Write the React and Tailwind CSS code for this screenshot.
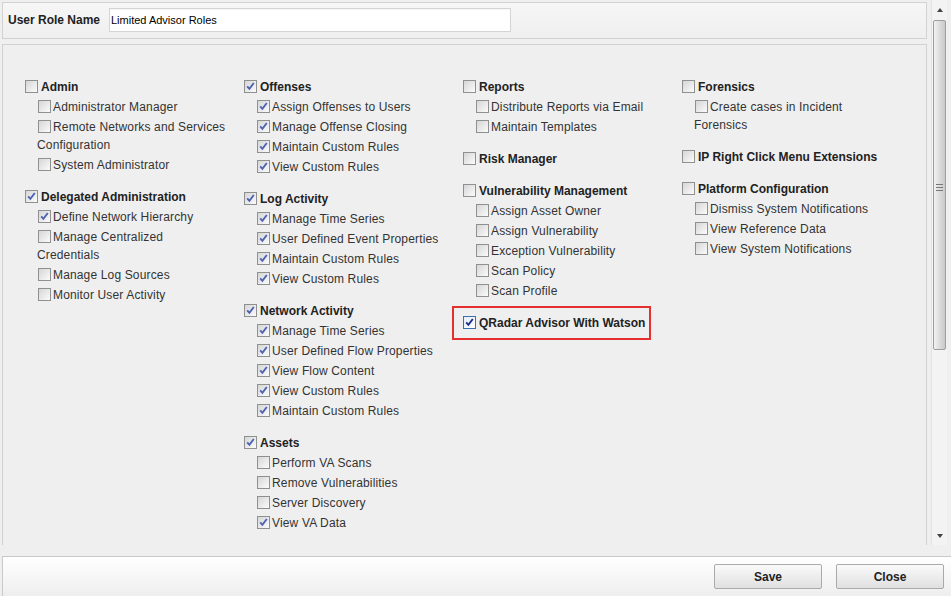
import React from 'react'

const columns = [
  [
    { title: 'Admin', checked: false, items: [
      { label: 'Administrator Manager' },
      { label: 'Remote Networks and Services Configuration' },
      { label: 'System Administrator' },
    ] },
    { title: 'Delegated Administration', checked: true, items: [
      { label: 'Define Network Hierarchy', checked: true },
      { label: 'Manage Centralized Credentials' },
      { label: 'Manage Log Sources' },
      { label: 'Monitor User Activity' },
    ] },
  ],
  [
    { title: 'Offenses', checked: true, items: [
      { label: 'Assign Offenses to Users', checked: true },
      { label: 'Manage Offense Closing', checked: true },
      { label: 'Maintain Custom Rules', checked: true },
      { label: 'View Custom Rules', checked: true },
    ] },
    { title: 'Log Activity', checked: true, items: [
      { label: 'Manage Time Series', checked: true },
      { label: 'User Defined Event Properties', checked: true },
      { label: 'Maintain Custom Rules', checked: true },
      { label: 'View Custom Rules', checked: true },
    ] },
    { title: 'Network Activity', checked: true, items: [
      { label: 'Manage Time Series', checked: true },
      { label: 'User Defined Flow Properties', checked: true },
      { label: 'View Flow Content', checked: true },
      { label: 'View Custom Rules', checked: true },
      { label: 'Maintain Custom Rules', checked: true },
    ] },
    { title: 'Assets', checked: true, items: [
      { label: 'Perform VA Scans' },
      { label: 'Remove Vulnerabilities' },
      { label: 'Server Discovery' },
      { label: 'View VA Data', checked: true },
    ] },
  ],
  [
    { title: 'Reports', checked: false, items: [
      { label: 'Distribute Reports via Email' },
      { label: 'Maintain Templates' },
    ] },
    { title: 'Risk Manager', checked: false, items: [] },
    { title: 'Vulnerability Management', checked: false, items: [
      { label: 'Assign Asset Owner' },
      { label: 'Assign Vulnerability' },
      { label: 'Exception Vulnerability' },
      { label: 'Scan Policy' },
      { label: 'Scan Profile' },
    ] },
    { title: 'QRadar Advisor With Watson', checked: true, focus: true, highlight: true, items: [] },
  ],
  [
    { title: 'Forensics', checked: false, items: [
      { label: 'Create cases in Incident Forensics' },
    ] },
    { title: 'IP Right Click Menu Extensions', checked: false, items: [] },
    { title: 'Platform Configuration', checked: false, items: [
      { label: 'Dismiss System Notifications' },
      { label: 'View Reference Data' },
      { label: 'View System Notifications' },
    ] },
  ],
]

function Box({ checked, focus }) {
  return (
    <span
      className={
        'relative inline-block w-[13px] h-[13px] align-[-2px] border ' +
        (focus
          ? 'border-[#3a6fb0] bg-gradient-to-br from-[#e4ecf6] to-white'
          : 'border-[#8f9090] bg-gradient-to-br from-[#d6d6d6] to-[#fbfbfb]')
      }
    >
      {checked && (
        <svg viewBox="0 0 11 11" className="absolute left-0 top-0 w-[11px] h-[11px]">
          <path
            d="M2.2 5.4 L4.4 7.8 L8.8 2"
            fill="none"
            stroke={focus ? '#1b2c8c' : '#4d63b3'}
            strokeWidth="1.9"
          />
        </svg>
      )}
    </span>
  )
}

function Group({ group }) {
  return (
    <div className="relative mb-[12px]">
      {group.highlight && (
        <div className="absolute left-[-11px] top-[-7px] w-[199px] h-[34px] border-2 border-[#e5302f]" />
      )}
      <div className="py-[1px] leading-[18px] font-bold text-[#222]">
        <Box checked={group.checked} focus={group.focus} />
        <span className="ml-[3px]">{group.title}</span>
      </div>
      {group.items.map((it) => (
        <div key={it.label} className="pl-[12px] py-[1px] leading-[18px] text-[#333] tracking-[0.15px]">
          <span className="ml-[1px]">
            <Box checked={it.checked} />
          </span>
          <span className="ml-[2px]">{it.label}</span>
        </div>
      ))}
    </div>
  )
}

function Scrollbar() {
  return (
    <div className="w-[16px] h-[545px] flex flex-col bg-[#f3f3f3] border-l border-[#e2e2e2]">
      <div className="h-[20px] flex items-center justify-center">
        <div className="w-0 h-0 border-l-[3px] border-r-[3px] border-b-[4px] border-l-transparent border-r-transparent border-b-[#444]" />
      </div>
      <div className="h-[330px] mx-[1px] rounded-[2px] border border-[#9d9d9d] bg-gradient-to-r from-[#f2f2f2] via-[#dcdcdc] to-[#c9c9c9] flex items-end justify-center pb-[158px]">
        <div className="flex flex-col gap-[2px]">
          <div className="w-[7px] h-px bg-[#777]" />
          <div className="w-[7px] h-px bg-[#777]" />
          <div className="w-[7px] h-px bg-[#777]" />
        </div>
      </div>
      <div className="flex-1" />
      <div className="h-[18px] flex items-center justify-center">
        <div className="w-0 h-0 border-l-[3px] border-r-[3px] border-t-[4px] border-l-transparent border-r-transparent border-t-[#444]" />
      </div>
    </div>
  )
}

export default function App() {
  return (
    <div
      className="w-[951px] h-[596px] overflow-hidden bg-[#efefef] flex flex-col text-[12px]"
      style={{ fontFamily: '"Liberation Sans", Arial, sans-serif' }}
    >
      <div className="h-[556px] flex">
        <div className="w-[925px] ml-[2px] flex flex-col overflow-hidden">
          <div className="mt-[2px] h-[37px] flex items-center border border-[#d2d2d2] bg-gradient-to-b from-[#f6f6f6] to-[#efefef] pl-[5px] pb-[1px]">
            <span className="font-bold text-[#222] w-[101px]">User Role Name</span>
            <div className="w-[402px] h-[24px] border border-[#d4d4d4] bg-white flex items-center pl-[1px] text-[11px] text-black shadow-[inset_0_1px_1px_rgba(0,0,0,0.04)]">
              Limited Advisor Roles
            </div>
          </div>
          <div className="mt-[5px] h-[501px] border-l border-t border-r border-[#d2d2d2] bg-[#efefef] pt-[32px] pl-[22px] flex">
            {columns.map((col, i) => (
              <div key={i} className="w-[219px] pr-[18px]">
                {col.map((g) => (
                  <Group key={g.title} group={g} />
                ))}
              </div>
            ))}
          </div>
        </div>
        <div className="ml-[4px]">
          <Scrollbar />
        </div>
      </div>
      <div className="h-[40px] ml-[2px] border-l border-t border-[#c9c9c9] bg-gradient-to-b from-white to-[#eeeeee] flex items-center justify-end gap-[14px] pr-[7px]">
        <button className="w-[108px] h-[25px] rounded-[2px] border border-[#aaa] bg-gradient-to-b from-[#fafafa] to-[#e0e0e0] font-bold text-[#222] text-[12px]">
          Save
        </button>
        <button className="w-[108px] h-[25px] rounded-[2px] border border-[#aaa] bg-gradient-to-b from-[#fafafa] to-[#e0e0e0] font-bold text-[#222] text-[12px]">
          Close
        </button>
      </div>
    </div>
  )
}
